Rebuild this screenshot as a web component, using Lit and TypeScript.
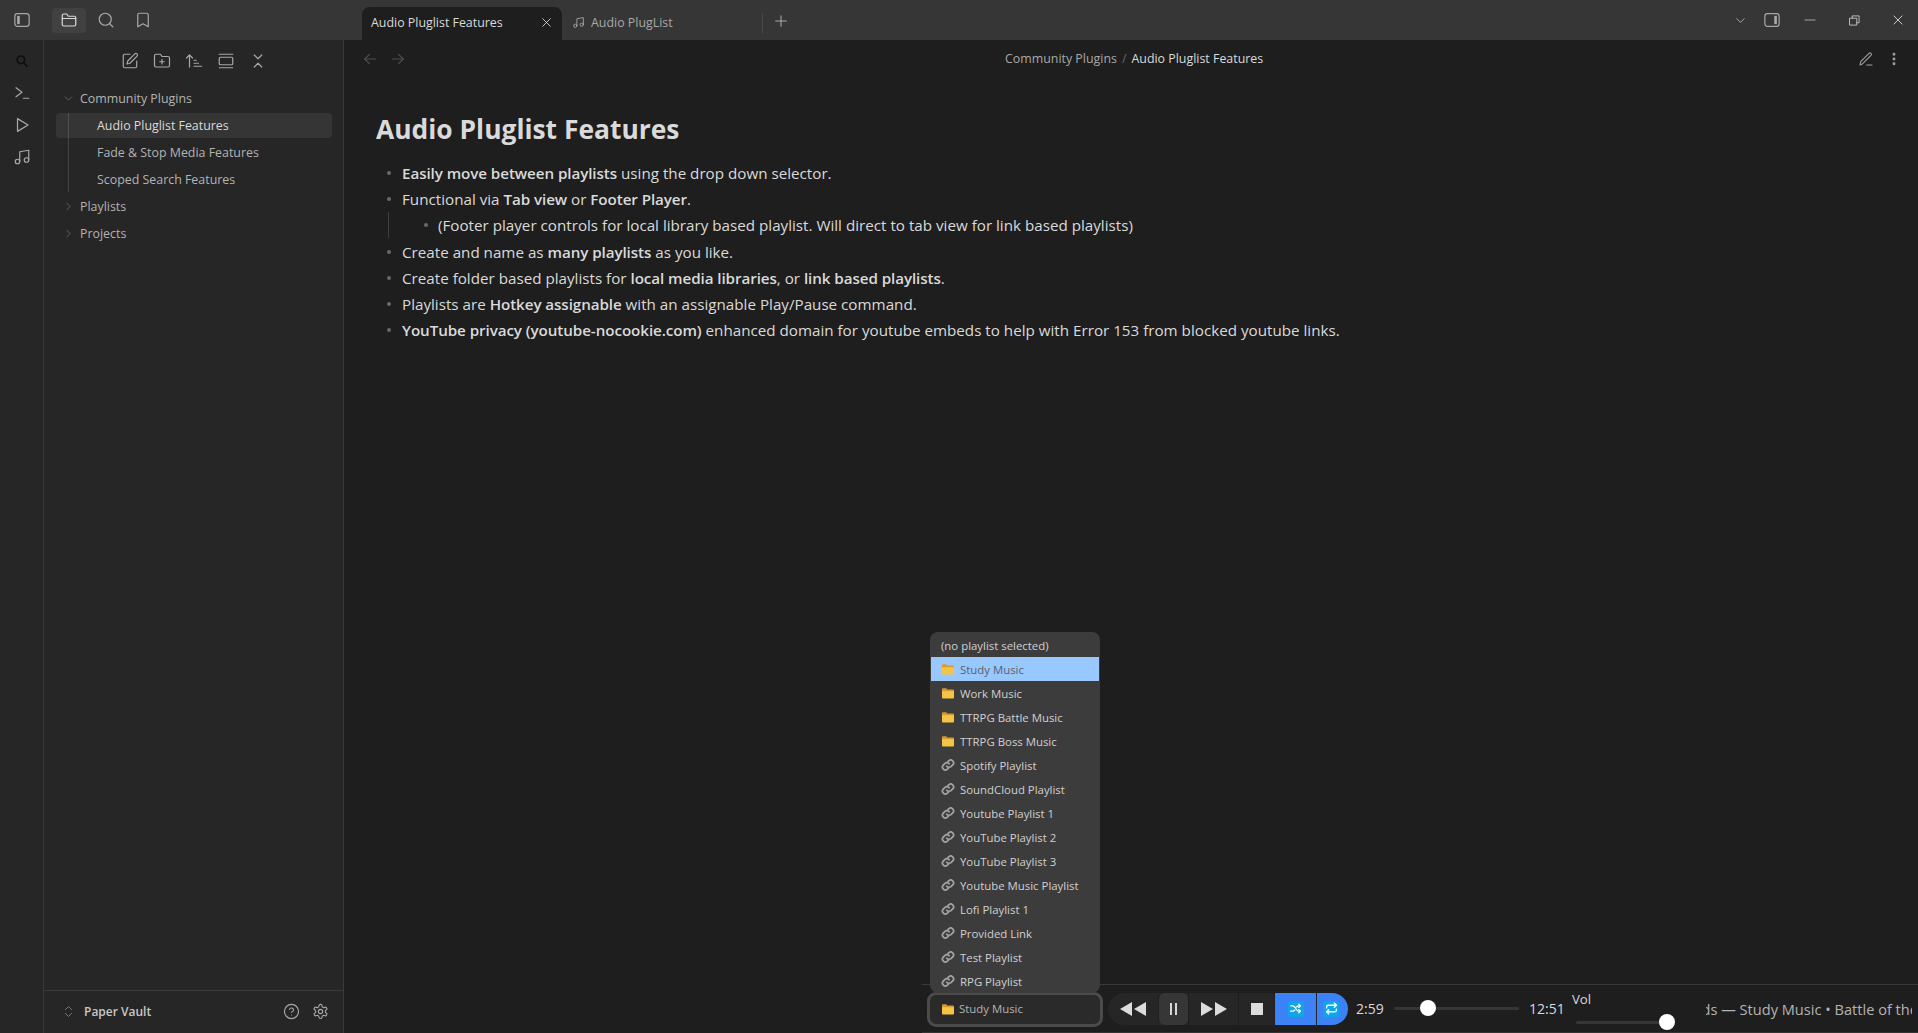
import { LitElement, html, css, svg } from 'lit';
import { customElement } from 'lit/decorators.js';

// lucide-ish stroke icons
const icon = (body: unknown, size = 18, sw = 1.6) => html`<svg class="ico" width=${size} height=${size} viewBox="0 0 24 24" fill="none" stroke="currentColor" stroke-width=${sw} stroke-linecap="round" stroke-linejoin="round">${body}</svg>`;

const I = {
  sidebarLeft: svg`<rect x="2.5" y="3.5" width="19" height="17" rx="3.5"/><rect x="5.5" y="6.5" width="3.5" height="11" fill="currentColor" stroke="none"/>`,
  sidebarRight: svg`<rect x="2.5" y="3.5" width="19" height="17" rx="3.5"/><rect x="15" y="6.5" width="3.5" height="11" fill="currentColor" stroke="none"/>`,
  folder: svg`<path d="M3 7V6a2 2 0 0 1 2-2h4l2 3h8a2 2 0 0 1 2 2v9a2 2 0 0 1-2 2H5a2 2 0 0 1-2-2Z"/><path d="M3 10h18"/>`,
  search: svg`<circle cx="11" cy="11" r="8"/><path d="m21 21-4.3-4.3"/>`,
  bookmark: svg`<path d="m19 21-7-4-7 4V5a2 2 0 0 1 2-2h10a2 2 0 0 1 2 2Z"/>`,
  terminal: svg`<path d="m4 5 8 6-8 6"/><path d="M14 19h7"/>`,
  play: svg`<path d="M6 3.5 20 12 6 20.5Z"/>`,
  music: svg`<path d="M9 18V5l12-2v13"/><circle cx="6" cy="18" r="3"/><circle cx="18" cy="16" r="3"/>`,
  edit: svg`<path d="M12 3H5a2 2 0 0 0-2 2v14a2 2 0 0 0 2 2h14a2 2 0 0 0 2-2v-7"/><path d="M18.4 2.6a2.1 2.1 0 0 1 3 3L12 15l-4 1 1-4Z"/>`,
  folderPlus: svg`<path d="M4 20h16a2 2 0 0 0 2-2V8a2 2 0 0 0-2-2h-8l-2-3H4a2 2 0 0 0-2 2v13a2 2 0 0 0 2 2Z"/><path d="M12 10v6"/><path d="M9 13h6"/>`,
  sort: svg`<path d="m2 8 4-4 4 4"/><path d="M6 4v16"/><path d="M12 11h3"/><path d="M12 15h6"/><path d="M12 19h10"/>`,
  expand: svg`<path d="M3 3h18"/><path d="M3 21h18"/><rect x="3" y="7" width="18" height="10" rx="1.5"/>`,
  collapse: svg`<path d="m7 20 5-5 5 5"/><path d="m7 4 5 5 5-5"/>`,
  chevronDown: svg`<path d="m6 9 6 6 6-6"/>`,
  chevronRight: svg`<path d="m9 6 6 6-6 6"/>`,
  chevronsUpDown: svg`<path d="m7 9 5-5 5 5"/><path d="m7 15 5 5 5-5"/>`,
  close: svg`<path d="M5 5l14 14"/><path d="M19 5 5 19"/>`,
  plus: svg`<path d="M12 4v16"/><path d="M4 12h16"/>`,
  arrowLeft: svg`<path d="m11 5-7 7 7 7"/><path d="M20 12H4"/>`,
  arrowRight: svg`<path d="m13 5 7 7-7 7"/><path d="M4 12h16"/>`,
  pen: svg`<path d="M3 21l1-5L16.5 3.5a2.1 2.1 0 0 1 3 3L7 19Z"/><path d="M13 21h8"/>`,
  help: svg`<circle cx="12" cy="12" r="10"/><path d="M9.1 9a3 3 0 0 1 5.8 1c0 2-3 3-3 3"/><path d="M12 17h.01"/>`,
  gear: svg`<path d="M12.2 2h-.4a2 2 0 0 0-2 2v.2a2 2 0 0 1-1 1.7l-.4.3a2 2 0 0 1-2 0l-.2-.1a2 2 0 0 0-2.7.7l-.2.4a2 2 0 0 0 .7 2.7l.2.1a2 2 0 0 1 1 1.7v.5a2 2 0 0 1-1 1.7l-.2.1a2 2 0 0 0-.7 2.7l.2.4a2 2 0 0 0 2.7.7l.2-.1a2 2 0 0 1 2 0l.4.3a2 2 0 0 1 1 1.7v.2a2 2 0 0 0 2 2h.4a2 2 0 0 0 2-2v-.2a2 2 0 0 1 1-1.7l.4-.3a2 2 0 0 1 2 0l.2.1a2 2 0 0 0 2.7-.7l.2-.4a2 2 0 0 0-.7-2.7l-.2-.1a2 2 0 0 1-1-1.7v-.5a2 2 0 0 1 1-1.7l.2-.1a2 2 0 0 0 .7-2.7l-.2-.4a2 2 0 0 0-2.7-.7l-.2.1a2 2 0 0 1-2 0l-.4-.3a2 2 0 0 1-1-1.7V4a2 2 0 0 0-2-2Z"/><circle cx="12" cy="12" r="3"/>`,
  dots: svg`<circle cx="12" cy="5" r="1.4" fill="currentColor"/><circle cx="12" cy="12" r="1.4" fill="currentColor"/><circle cx="12" cy="19" r="1.4" fill="currentColor"/>`,
  shuffle: svg`<path d="M3 7h4c2 0 3 1 4.5 3.5L13 13c1.500 2.500 2.500 4 5 4h3"/><path d="M3 17h4c1.500 0 2.500-.7 3.500-2"/><path d="M14 9c1-1.300 2-2 4-2h3"/><path d="m18 4 3 3-3 3"/><path d="m18 14 3 3-3 3"/>`,
  repeat: svg`<path d="m17 2 4 4-4 4"/><path d="M3 11V9a3 3 0 0 1 3-3h15"/><path d="m7 22-4-4 4-4"/><path d="M21 13v2a3 3 0 0 1-3 3H3"/>`,
};

// the emoji-like glyphs used by the playlist dropdown
const folderEmoji = html`<svg class="ico" width="14" height="14" viewBox="0 0 14 14"><path d="M1 3.200a1 1 0 0 1 1-1h3l1.300 1.300H12a1 1 0 0 1 1 1V6H1Z" fill="#d99a2b"/><path d="M1 5.200h12v6.300a1 1 0 0 1-1 1H2a1 1 0 0 1-1-1Z" fill="#f6c445"/></svg>`;
const linkEmoji = html`<svg class="ico" width="14" height="14" viewBox="0 0 24 24" fill="none" stroke="#a3a3a3" stroke-width="3" stroke-linecap="round"><path d="M10 14a5 5 0 0 0 7.500.5l3-3a5 5 0 0 0-7-7l-1.700 1.700"/><path d="M14 10a5 5 0 0 0-7.500-.5l-3 3a5 5 0 0 0 7 7l1.700-1.700"/></svg>`;

const PLAYLISTS: [string, boolean][] = [
  ['Study Music', true],
  ['Work Music', true],
  ['TTRPG Battle Music', true],
  ['TTRPG Boss Music', true],
  ['Spotify Playlist', false],
  ['SoundCloud Playlist', false],
  ['Youtube Playlist 1', false],
  ['YouTube Playlist 2', false],
  ['YouTube Playlist 3', false],
  ['Youtube Music Playlist', false],
  ['Lofi Playlist 1', false],
  ['Provided Link', false],
  ['Test Playlist', false],
  ['RPG Playlist', false],
];

@customElement('app-root')
export class AppRoot extends LitElement {
  static styles = css`
    :host {
      display: block;
      height: 100vh;
      overflow: hidden;
      font-family: 'Open Sans', 'Noto Sans', sans-serif;
      color: #dadada;
      background: #1e1e1e;
    }
    .ico { display: block; flex: none; }

    /* title bar */
    .titlebar {
      height: 40px;
      background: #363636;
      display: flex;
      align-items: flex-end;
      color: #a8a8a8;
    }
    .tb-left {
      width: 362px;
      height: 40px;
      display: flex;
      align-items: center;
      padding-left: 12px;
      box-sizing: border-box;
    }
    .tb-btn { width: 34px; height: 25px; display: flex; align-items: center; justify-content: center; border-radius: 4px; }
    .tb-btn.first { width: 20px; margin-right: 20px; }
    .tb-btn.on { background: #414141; color: #dadada; }
    .tb-btn.s { width: 40px; }
    .tab {
      width: 200px;
      height: 33px;
      box-sizing: border-box;
      display: flex;
      align-items: center;
      font-size: 12.4px;
      padding: 0 9px 2px;
      border-radius: 8px 8px 0 0;
    }
    .tab.active { background: #1e1e1e; color: #dadada; }
    .tab.active span { flex: 1; }
    .tab.other { color: #a8a8a8; gap: 6px; padding-left: 10px; }
    .tab-sep { width: 1px; height: 20px; background: #4a4a4a; margin: 0 0 7px 0; align-self: flex-end; }
    .tab-plus { margin: 0 0 11px 10px; }
    .tb-right { margin-left: auto; height: 40px; display: flex; align-items: center; }
    .tb-right .w { width: 44px; display: flex; justify-content: center; color: #d4d4d4; }
    .tb-right .w:last-child { width: 40px; margin-left: 2px; }
    .tb-right .n { width: 32px; display: flex; justify-content: center; }

    /* body */
    .body { display: flex; height: 993px; }
    .ribbon {
      width: 43px;
      background: #262626;
      border-right: 1px solid #3a3a3a;
      display: flex;
      flex-direction: column;
      align-items: center;
      padding-top: 12px;
      gap: 14px;
      color: #a8a8a8;
      flex: none;
    }
    .ribbon .find { margin: 2px 0; color: #0d0d0d; }
    .sidebar {
      width: 299px;
      background: #262626;
      border-right: 1px solid #3a3a3a;
      display: flex;
      flex-direction: column;
      flex: none;
    }
    .side-actions { display: flex; gap: 14px; padding: 12px 0 0 77px; color: #a8a8a8; height: 30px; }
    .tree { flex: 1; padding: 4px 11px 0 12px; font-size: 12.4px; color: #b3b3b3; }
    .row { height: 25px; margin-bottom: 2px; display: flex; align-items: center; border-radius: 4px; }
    .row .chev { width: 24px; display: flex; justify-content: center; color: #6b6b6b; }
    .kids { border-left: 1px solid #444; margin-left: 12px; margin-bottom: 2px; }
    .kids .row { padding-left: 41px; margin-left: -13px; }
    .kids .row:last-child { margin-bottom: 0; }
    .kids .row.sel { background: rgba(255, 255, 255, 0.07); color: #dadada; }
    .vault {
      height: 43px;
      box-sizing: border-box;
      padding: 0 11px 1px 12px;
      border-top: 1px solid #3a3a3a;
      display: flex;
      align-items: center;
      font-size: 12px;
      font-weight: 600;
      color: #c8c8c8;
      flex: none;
    }
    .vault .chev { width: 24px; margin-right: 4px; display: flex; justify-content: center; color: #7a7a7a; }
    .vault .name { flex: 1; }
    .vault .acts { display: flex; gap: 12px; color: #a8a8a8; font-weight: 400; padding-right: 3px; }

    /* main */
    .main { flex: 1; min-width: 0; display: flex; flex-direction: column; background: #1e1e1e; }
    .viewhead { height: 36px; display: flex; align-items: center; padding: 2px 16px 0 18px; box-sizing: border-box; color: #4f4f4f; flex: none; }
    .viewhead .nav { display: flex; gap: 12px; width: 560px; }
    .crumb { flex: 1; font-size: 12.4px; color: #a8a8a8; padding-left: 83px; margin-top: -2px; }
    .crumb b { font-weight: 400; color: #dadada; }
    .crumb i { font-style: normal; color: #666; margin: 0 5px; }
    .viewhead .acts { display: flex; gap: 12px; color: #a0a0a0; }
    .content { flex: 1; min-height: 0; padding: 34px 0 0 32px; }
    h1 { margin: 0 0 11.5px; font-size: 26.4px; line-height: 38px; font-weight: 700; color: #dadada; }
    ul { margin: 0; padding: 0; list-style: none; font-size: 15.2px; line-height: 26px; color: #dadada; }
    li { padding-left: 26px; position: relative; }
    li::before { content: ''; position: absolute; left: 11px; top: 11px; width: 4px; height: 4px; border-radius: 50%; background: #6a6a6a; }
    li b { font-weight: 600; letter-spacing: -0.08px; }
    ul ul { margin: 0 0 1px -14px; border-left: 1px solid #3f3f3f; }
    ul ul li { padding-left: 49px; }
    ul ul li::before { left: 35px; }

    /* footer player */
    .player {
      align-self: flex-end;
      width: 996px;
      height: 49px;
      box-sizing: border-box;
      border-top: 1px solid #3a3a3a;
      border-bottom: 1px solid #333;
      display: flex;
      align-items: center;
      color: #dadada;
      font-size: 14px;
      flex: none;
    }
    .select-wrap { position: relative; margin: 2px 0 0 5px; flex: none; }
    .select {
      width: 176px;
      height: 35px;
      box-sizing: border-box;
      border: 3px solid #4b4b4b;
      border-radius: 9px;
      background: #2a2a2a;
      display: flex;
      align-items: center;
      gap: 4px;
      padding: 0 0 2px 11px;
      font-size: 11.4px;
      color: #b3b3b3;
    }
    .menu {
      position: absolute;
      left: 3px;
      bottom: 34px;
      width: 170px;
      box-sizing: border-box;
      padding: 1px 1px 0;
      border-radius: 8px;
      background: #3c3c3c;
      font-size: 11.4px;
      color: #d0d0d0;
    }
    .menu .opt { height: 24px; display: flex; align-items: center; gap: 5px; padding-left: 10px; }
    .menu .opt.hi { background: #99c8ff; color: #5a5f69; }
    .controls {
      margin-left: 5px;
      width: 240px;
      height: 32px;
      display: flex;
      background: #262626;
      border-radius: 16px;
      overflow: hidden;
      flex: none;
    }
    .ctl { display: flex; align-items: center; justify-content: center; border-left: 1px solid #1e1e1e; box-sizing: border-box; color: #dcdcdc; flex: none; }
    .ctl.rew { width: 50px; border-left: 0; }
    .ctl.pause { width: 30px; background: #363636; border-radius: 6px; gap: 3px; }
    .ctl.pause i { width: 2px; height: 12px; background: #d8d8d8; }
    .ctl.ff { width: 50px; }
    .ctl.stop { width: 36px; }
    .ctl.stop i { width: 12px; height: 12px; background: #dcdcdc; }
    .ctl.blue { background: #3b82f6; }
    .ctl.shuf { width: 42px; }
    .ctl.rep { width: 32px; padding-right: 3px; border-left-color: #262626; }
    .ctl.blue span { width: 16px; height: 16px; background: #0ea5e9; border-radius: 2px; display: flex; align-items: center; justify-content: center; color: #fff; }
    .time { flex: none; }
    .time.a { margin-left: 8px; width: 38px; }
    .time.b { margin-left: 10px; width: 43px; }
    .track { height: 3px; background: #363636; border-radius: 2px; position: relative; flex: none; }
    .track.seek { width: 125px; margin-top: -1px; }
    .knob { position: absolute; top: -7px; width: 16px; height: 16px; border-radius: 50%; background: #fff; }
    .vol { width: 94px; flex: none; height: 47px; position: relative; font-size: 13.2px; }
    .vol .lbl { position: absolute; left: 0; top: 5px; line-height: 18px; }
    .vol .track { position: absolute; left: 4px; top: 36px; width: 89px; }
    .ticker { flex: 1; min-width: 0; margin: 0 6px 0 40px; overflow: hidden; white-space: nowrap; color: #b3b3b3; font-size: 14.6px; }
    .ticker span { display: inline-block; margin-left: -4.5px; }
  `;

  render() {
    return html`
      <div class="titlebar">
        <div class="tb-left">
          <div class="tb-btn first">${icon(I.sidebarLeft)}</div>
          <div class="tb-btn on">${icon(I.folder)}</div>
          <div class="tb-btn s">${icon(I.search)}</div>
          <div class="tb-btn">${icon(I.bookmark)}</div>
        </div>
        <div class="tab active"><span>Audio Pluglist Features</span>${icon(I.close, 13)}</div>
        <div class="tab other">${icon(I.music, 13)}Audio PlugList</div>
        <div class="tab-sep"></div>
        <div class="tab-plus">${icon(I.plus, 16)}</div>
        <div class="tb-right">
          <div class="n">${icon(I.chevronDown, 15)}</div>
          <div class="n">${icon(I.sidebarRight)}</div>
          <div class="w">${icon(svg`<path d="M2 12h20"/>`, 12, 1.4)}</div>
          <div class="w">${icon(svg`<rect x="2" y="7" width="15" height="15"/><path d="M7 7V2h15v15h-5"/>`, 11, 1.800)}</div>
          <div class="w">${icon(I.close, 14)}</div>
        </div>
      </div>
      <div class="body">
        <div class="ribbon">
          <div class="find">${icon(svg`<circle cx="10" cy="10" r="6.500"/><path d="m15 15 6 6"/>`, 14, 2.600)}</div>
          ${icon(I.terminal)}
          ${icon(I.play)}
          ${icon(I.music)}
        </div>
        <div class="sidebar">
          <div class="side-actions">
            ${icon(I.edit)}${icon(I.folderPlus)}${icon(I.sort)}${icon(I.expand)}${icon(I.collapse)}
          </div>
          <div class="tree">
            <div class="row"><span class="chev">${icon(I.chevronDown, 13)}</span>Community Plugins</div>
            <div class="kids">
              <div class="row sel">Audio Pluglist Features</div>
              <div class="row">Fade &amp; Stop Media Features</div>
              <div class="row">Scoped Search Features</div>
            </div>
            <div class="row"><span class="chev">${icon(I.chevronRight, 13)}</span>Playlists</div>
            <div class="row"><span class="chev">${icon(I.chevronRight, 13)}</span>Projects</div>
          </div>
          <div class="vault">
            <span class="chev">${icon(I.chevronsUpDown, 15)}</span>
            <span class="name">Paper Vault</span>
            <span class="acts">${icon(I.help, 17)}${icon(I.gear, 17)}</span>
          </div>
        </div>
        <div class="main">
          <div class="viewhead">
            <div class="nav">${icon(I.arrowLeft, 16)}${icon(I.arrowRight, 16)}</div>
            <div class="crumb">Community Plugins<i>/</i><b>Audio Pluglist Features</b></div>
            <div class="acts">${icon(I.pen, 16)}${icon(I.dots, 16)}</div>
          </div>
          <div class="content">
            <h1>Audio Pluglist Features</h1>
            <ul>
              <li><b>Easily move between playlists</b> using the drop down selector.</li>
              <li>Functional via <b>Tab view</b> or <b>Footer Player</b>.
                <ul><li>(Footer player controls for local library based playlist. Will direct to tab view for link based playlists)</li></ul>
              </li>
              <li>Create and name as <b>many playlists</b> as you like.</li>
              <li>Create folder based playlists for <b>local media libraries</b>, or <b>link based playlists</b>.</li>
              <li>Playlists are <b>Hotkey assignable</b> with an assignable Play/Pause command.</li>
              <li><b>YouTube privacy (youtube-nocookie.com)</b> enhanced domain for youtube embeds to help with Error 153 from blocked youtube links.</li>
            </ul>
          </div>
          ${this.renderPlayer()}
        </div>
      </div>
    `;
  }

  renderPlayer() {
    return html`
      <div class="player">
        <div class="select-wrap">
          <div class="menu">
            <div class="opt">(no playlist selected)</div>
            ${PLAYLISTS.map(([name, local], i) => html`
              <div class="opt ${i === 0 ? 'hi' : ''}">${local ? folderEmoji : linkEmoji}${name}</div>`)}
          </div>
          <div class="select">${folderEmoji}Study Music</div>
        </div>
        <div class="controls">
          <div class="ctl rew"><svg width="28" height="14" viewBox="0 0 28 14" fill="currentColor"><path d="M13 0v14L1 7Z"/><path d="M27 0v14L15 7Z"/></svg></div>
          <div class="ctl pause"><i></i><i></i></div>
          <div class="ctl ff"><svg width="28" height="14" viewBox="0 0 28 14" fill="currentColor"><path d="M1 0v14l12-7Z"/><path d="M15 0v14l12-7Z"/></svg></div>
          <div class="ctl stop"><i></i></div>
          <div class="ctl blue shuf"><span>${icon(I.shuffle, 13, 2.4)}</span></div>
          <div class="ctl blue rep"><span>${icon(I.repeat, 13, 2.4)}</span></div>
        </div>
        <div class="time a">2:59</div>
        <div class="track seek"><div class="knob" style="left: ${34 - 8}px"></div></div>
        <div class="time b">12:51</div>
        <div class="vol">
          <div class="lbl">Vol</div>
          <div class="track"><div class="knob" style="left: 83px"></div></div>
        </div>
        <div class="ticker"><span>ds — Study Music • Battle of the Bands</span></div>
      </div>
    `;
  }
}
